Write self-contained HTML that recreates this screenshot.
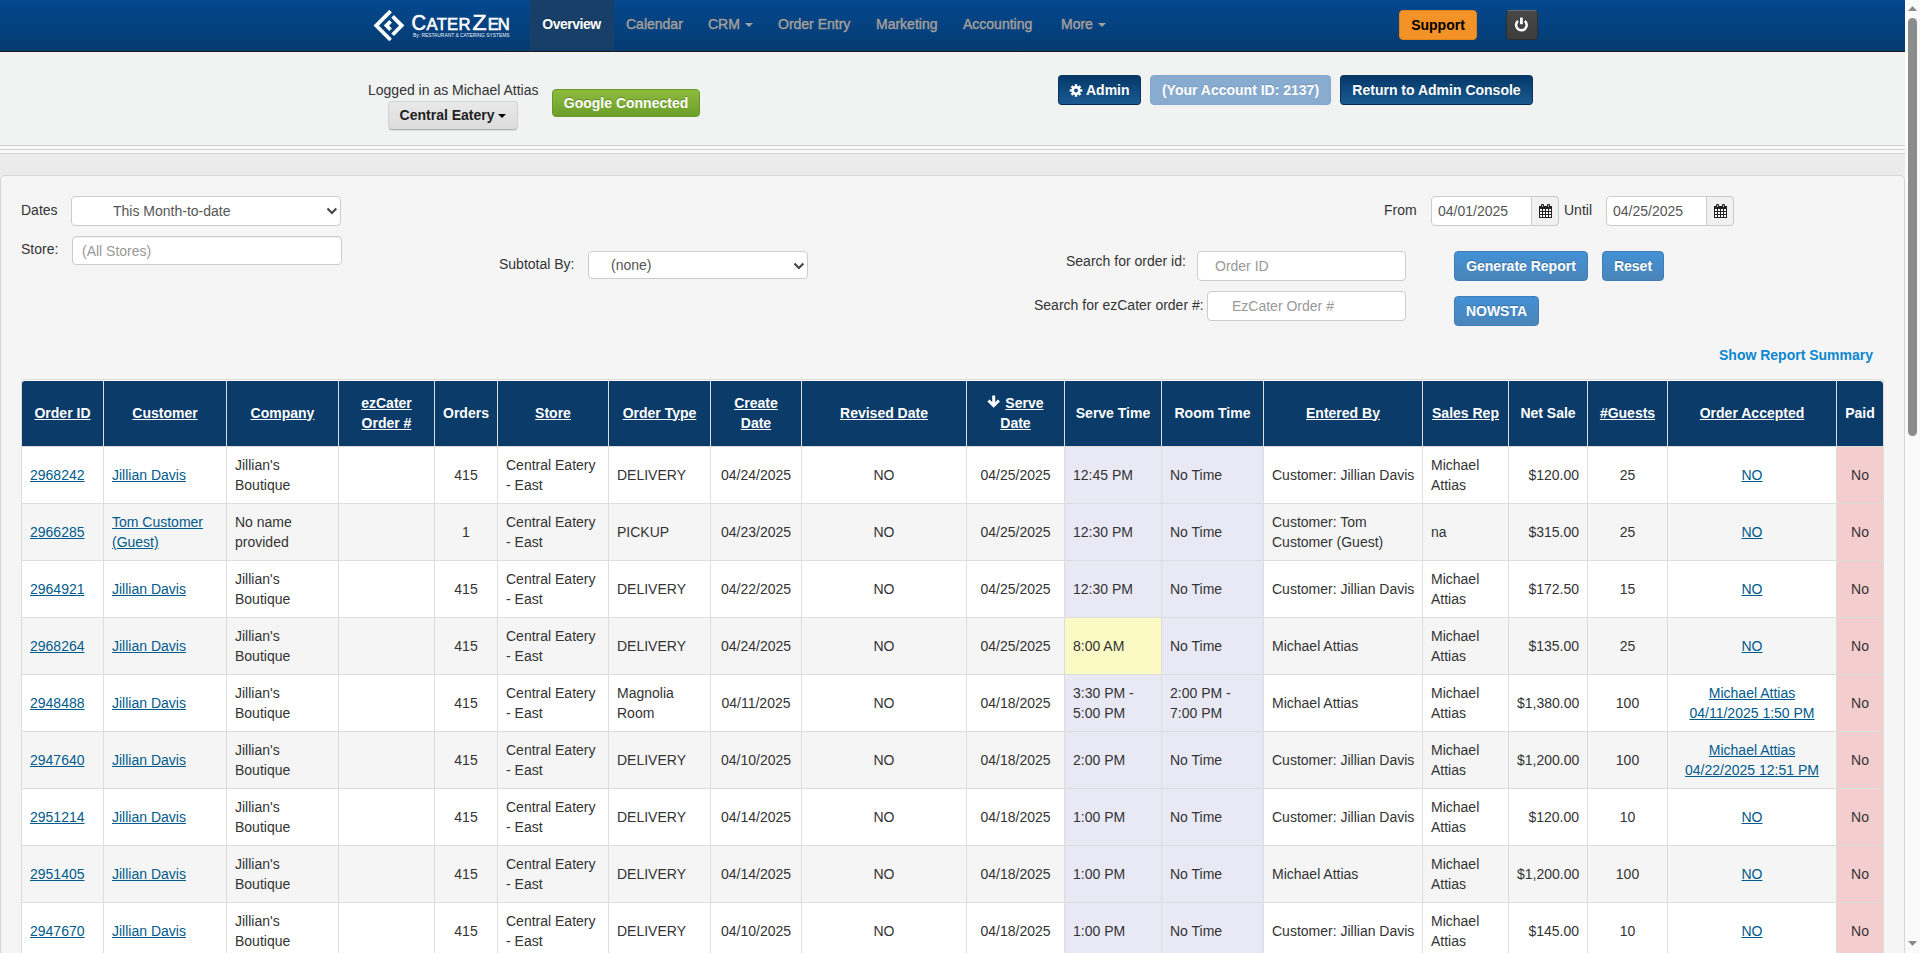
<!DOCTYPE html>
<html><head><meta charset="utf-8">
<style>
*{box-sizing:border-box}
html,body{margin:0;padding:0;width:1920px;height:953px;overflow:hidden;background:#f5f5f5}
body{font-family:"Liberation Sans",sans-serif;font-size:14px;line-height:20px;color:#333;position:relative}
.abs{position:absolute}
#nav{left:0;top:0;width:1905px;height:52px;background:linear-gradient(#04488f,#053b70);border-bottom:1px solid #1c1c1c}
#nav .it{position:absolute;top:0;height:50px;line-height:48px;color:#a0a0a0;font-size:14px;white-space:nowrap;-webkit-text-stroke:0.45px #a0a0a0;text-shadow:0 -1px 0 rgba(0,0,0,.25)}
#nav .act{background:#173f68;color:#fff;font-weight:bold;letter-spacing:-0.5px;text-align:center;-webkit-text-stroke:0;text-indent:-1px}
.caret{display:inline-block;width:0;height:0;border-left:4px solid transparent;border-right:4px solid transparent;border-top:4px solid #a3a3a3;vertical-align:middle;margin-left:3px;margin-top:0px}
#topwell{left:0;top:52px;width:1905px;height:93px;background:#f1f2f2}
.hl{position:absolute;left:0;width:1905px;height:1px;background:#d2d2d2}
.btn{position:absolute;border-radius:4px;font-weight:bold;text-align:center;white-space:nowrap}
#panel{left:0;top:175px;width:1905px;height:800px;background:#f5f5f5;border:1px solid #d6d6d6;border-radius:4px}
.lbl{position:absolute;white-space:nowrap;color:#333}
.inp{position:absolute;background:#fff;border:1px solid #ccc;border-radius:4px;white-space:nowrap;color:#555}
.ph{color:#999}
.bblue{background:linear-gradient(#4391d5,#4a84ba);color:#fff;border:1px solid #3f7cb8;text-shadow:0 -1px 0 rgba(0,0,0,.25)}
table{position:absolute;left:21px;top:379px;border-collapse:separate;border-spacing:0;table-layout:fixed;width:1863px;border:1px solid #ddd;border-left:0;border-bottom:0;border-radius:4px 4px 0 0}
th,td{border-left:1px solid #ddd;padding:8px 8px 8px 8px;vertical-align:middle;line-height:20px;text-align:left}
th{background:#0b3b68;color:#fff;font-weight:bold;text-align:center;border-top:1px solid #fff;padding:11px 8px 13px;height:66px}
th a{color:#fff;text-decoration:underline}
td{border-top:1px solid #ddd;height:57px;background:#fff;white-space:nowrap;overflow:hidden}
tr.s td{background:#f5f5f5}
td a{color:#005a8c;text-decoration:underline}
td.c{text-align:center}
td.r{text-align:right}
td.tm{background:#e9e8f5 !important}
td.ye{background:#fcfac4 !important}
td.pd{background:#f4cdcf !important;text-align:center}
th:first-child{border-top-left-radius:4px}
th:last-child{border-top-right-radius:4px}
</style></head><body>

<div id="nav" class="abs">
  <svg class="abs" style="left:0;top:0" width="520" height="52" viewBox="0 0 520 52">
    <g fill="none" stroke="#fff" stroke-width="3.75" stroke-linecap="butt" stroke-linejoin="miter">
      <polyline points="390.6,11.2 376.2,25.6 390.6,40"/>
      <polyline points="392.6,16.45 401.75,25.6 392.6,34.75"/>
      <polyline points="390.6,21.45 386.45,25.6 390.6,29.75"/>
    </g>
    <g fill="#fff" font-family="Liberation Sans" style="font-weight:normal">
      <text x="411.6" y="29.7" font-size="21.3" textLength="14.6" lengthAdjust="spacingAndGlyphs" stroke="#fff" stroke-width="0.6">C</text>
      <text x="426.5" y="29.6" font-size="16.6" textLength="44" lengthAdjust="spacing" stroke="#fff" stroke-width="0.6">ATER</text>
      <text x="472.6" y="29.6" font-size="22.5" textLength="14" lengthAdjust="spacingAndGlyphs" stroke="#fff" stroke-width="0.6">Z</text>
      <text x="487.8" y="29.6" font-size="16.6" textLength="22" lengthAdjust="spacing" stroke="#fff" stroke-width="0.6">EN</text>
      <text x="413" y="37" font-size="5.4" font-weight="normal" textLength="96.6" lengthAdjust="spacingAndGlyphs" fill="#eef2f8">By: RESTAURANT &amp; CATERING SYSTEMS</text>
    </g>
  </svg>
  <div class="it act" style="left:530px;width:84px">Overview</div>
  <div class="it" style="left:626px">Calendar</div>
  <div class="it" style="left:708px">CRM <span class="caret" style="margin-left:1px"></span></div>
  <div class="it" style="left:778px">Order Entry</div>
  <div class="it" style="left:876px">Marketing</div>
  <div class="it" style="left:963px">Accounting</div>
  <div class="it" style="left:1061px">More <span class="caret" style="margin-left:1.5px"></span></div>
  <div class="btn" style="left:1399px;top:10px;width:78px;height:30px;line-height:28px;background:#f39226;color:#000;border:1px solid #e08418">Support</div>
  <div class="btn" style="left:1506px;top:10px;width:32px;height:30px;background:linear-gradient(#474747,#3d3d3d);border:1px solid #2e2e2e;border-top-color:#6a6a6a">
    <svg class="abs" style="left:6px;top:3.5px" width="17" height="17" viewBox="0 0 17 17"><path d="M4.99 5.94 A5.3 5.3 0 1 0 11.81 5.94" fill="none" stroke="#fff" stroke-width="2.5"/><line x1="8.4" y1="2.6" x2="8.4" y2="9.2" stroke="#fff" stroke-width="2.8"/></svg>
  </div>
</div>

<div id="topwell" class="abs"></div>
<div class="hl" style="top:145px"></div>
<div class="abs" style="left:0;top:146px;width:1905px;height:3px;background:#f8f8f8"></div>
<div class="hl" style="top:149px"></div>
<div class="abs" style="left:0;top:150px;width:1905px;height:3px;background:#f8f8f8"></div>
<div class="hl" style="top:153px"></div>
<div class="abs" style="left:0;top:154px;width:1905px;height:21px;background:#ebebeb"></div>

<div class="lbl" style="left:368px;top:80px">Logged in as Michael Attias</div>
<div class="btn" style="left:388px;top:101px;width:130px;height:29px;line-height:27px;background:linear-gradient(#e9e9e9,#dcdcdc);color:#222;border:1px solid #d3d3d3;border-bottom-color:#b0b0b0;box-shadow:0 1px 1px rgba(0,0,0,.08)">Central Eatery <span class="caret" style="border-top-color:#000;margin-left:0"></span></div>
<div class="btn" style="left:552px;top:89px;width:148px;height:28px;line-height:26px;background:linear-gradient(#8dbb3c,#6c9f2a);color:#fff;border:1px solid #67982a;text-shadow:0 -1px 0 rgba(0,0,0,.25)">Google Connected</div>

<div class="btn" style="left:1058px;top:75px;width:83px;height:30px;line-height:28px;background:linear-gradient(#043868,#1b5b92);color:#fff;border:1px solid #07345f;border-bottom-color:#042a50;text-align:left;padding-left:27px;text-shadow:0 -1px 0 rgba(0,0,0,.25)">Admin</div>
<svg class="abs" style="left:1069px;top:84px" width="14" height="13" viewBox="-7 -6.5 14 13"><g fill="#fff"><circle r="4.6"/><rect x="-1.2" y="-6.3" width="2.4" height="12.6"/><rect x="-1.2" y="-6.3" width="2.4" height="12.6" transform="rotate(45)"/><rect x="-1.2" y="-6.3" width="2.4" height="12.6" transform="rotate(90)"/><rect x="-1.2" y="-6.3" width="2.4" height="12.6" transform="rotate(135)"/></g><circle r="1.9" fill="#0d4577"/></svg>
<div class="btn" style="left:1150px;top:75px;width:181px;height:30px;line-height:28px;background:#88abd0;color:#fff;border:1px solid #83a7cd;text-shadow:0 -1px 0 rgba(0,0,0,.15)">(Your Account ID: 2137)</div>
<div class="btn" style="left:1340px;top:75px;width:193px;height:30px;line-height:28px;background:linear-gradient(#043868,#1b5b92);color:#fff;border:1px solid #07345f;border-bottom-color:#042a50;text-shadow:0 -1px 0 rgba(0,0,0,.25)">Return to Admin Console</div>

<div id="panel" class="abs"></div>

<div class="lbl" style="left:21px;top:200px">Dates</div>
<div class="inp" style="left:71px;top:196px;width:270px;height:30px;line-height:28px;padding-left:41px">This Month-to-date</div>
<svg class="abs" style="left:326px;top:207px" width="12" height="8" viewBox="0 0 12 8"><polyline points="1.5,1.5 5.9,5.9 10.3,1.5" fill="none" stroke="#444" stroke-width="2.1"/></svg>
<div class="lbl" style="left:21px;top:239px">Store:</div>
<div class="inp ph" style="left:72px;top:236px;width:270px;height:29px;line-height:29px;padding-left:9px;box-shadow:inset 0 1px 1px rgba(0,0,0,.075)">(All Stores)</div>

<div class="lbl" style="left:499px;top:254px">Subtotal By:</div>
<div class="inp" style="left:588px;top:251px;width:220px;height:28px;line-height:26px;padding-left:22px">(none)</div>

<svg class="abs" style="left:793px;top:262px" width="12" height="8" viewBox="0 0 12 8"><polyline points="1.5,1.5 5.9,5.9 10.3,1.5" fill="none" stroke="#444" stroke-width="2.1"/></svg>
<div class="lbl" style="left:1384px;top:200px">From</div>
<div class="inp" style="left:1431px;top:196px;width:128px;height:30px;line-height:28px;padding-left:6px">04/01/2025</div>
<div class="abs" style="left:1531px;top:196px;width:28px;height:30px;background:#f1f1f1;border:1px solid #ccc;border-radius:0 4px 4px 0"></div><svg class="abs" style="left:1539px;top:204px" width="13" height="14" viewBox="0 0 13 14"><rect x="0" y="2" width="13" height="12" fill="#222"/><rect x="2" y="0" width="3" height="4" rx="1" fill="#222"/><rect x="8" y="0" width="3" height="4" rx="1" fill="#222"/><rect x="3" y="1" width="1" height="2" fill="#bbb"/><rect x="9" y="1" width="1" height="2" fill="#bbb"/><rect x="1" y="5" width="2" height="2" fill="#fff"/><rect x="1" y="8" width="2" height="2" fill="#fff"/><rect x="1" y="11" width="2" height="2" fill="#fff"/><rect x="4" y="5" width="2" height="2" fill="#fff"/><rect x="4" y="8" width="2" height="2" fill="#fff"/><rect x="4" y="11" width="2" height="2" fill="#fff"/><rect x="7" y="5" width="2" height="2" fill="#fff"/><rect x="7" y="8" width="2" height="2" fill="#fff"/><rect x="7" y="11" width="2" height="2" fill="#fff"/><rect x="10" y="5" width="2" height="2" fill="#fff"/><rect x="10" y="8" width="2" height="2" fill="#fff"/><rect x="10" y="11" width="2" height="2" fill="#fff"/></svg>
<div class="lbl" style="left:1564px;top:200px">Until</div>
<div class="inp" style="left:1606px;top:196px;width:128px;height:30px;line-height:28px;padding-left:6px">04/25/2025</div>

<div class="abs" style="left:1706px;top:196px;width:28px;height:30px;background:#f1f1f1;border:1px solid #ccc;border-radius:0 4px 4px 0"></div><svg class="abs" style="left:1714px;top:204px" width="13" height="14" viewBox="0 0 13 14"><rect x="0" y="2" width="13" height="12" fill="#222"/><rect x="2" y="0" width="3" height="4" rx="1" fill="#222"/><rect x="8" y="0" width="3" height="4" rx="1" fill="#222"/><rect x="3" y="1" width="1" height="2" fill="#bbb"/><rect x="9" y="1" width="1" height="2" fill="#bbb"/><rect x="1" y="5" width="2" height="2" fill="#fff"/><rect x="1" y="8" width="2" height="2" fill="#fff"/><rect x="1" y="11" width="2" height="2" fill="#fff"/><rect x="4" y="5" width="2" height="2" fill="#fff"/><rect x="4" y="8" width="2" height="2" fill="#fff"/><rect x="4" y="11" width="2" height="2" fill="#fff"/><rect x="7" y="5" width="2" height="2" fill="#fff"/><rect x="7" y="8" width="2" height="2" fill="#fff"/><rect x="7" y="11" width="2" height="2" fill="#fff"/><rect x="10" y="5" width="2" height="2" fill="#fff"/><rect x="10" y="8" width="2" height="2" fill="#fff"/><rect x="10" y="11" width="2" height="2" fill="#fff"/></svg>
<div class="lbl" style="left:1066px;top:251px">Search for order id:</div>
<div class="inp ph" style="left:1197px;top:251px;width:209px;height:30px;line-height:28px;padding-left:17px">Order ID</div>
<div class="lbl" style="left:1034px;top:295px">Search for ezCater order #:</div>
<div class="inp ph" style="left:1207px;top:291px;width:199px;height:30px;line-height:28px;padding-left:24px">EzCater Order #</div>

<div class="btn bblue" style="left:1454px;top:251px;width:134px;height:30px;line-height:28px">Generate Report</div>
<div class="btn bblue" style="left:1602px;top:251px;width:62px;height:30px;line-height:28px">Reset</div>
<div class="btn bblue" style="left:1454px;top:296px;width:85px;height:30px;line-height:28px">NOWSTA</div>

<div class="lbl" style="left:1719px;top:345px;color:#0a87ce;font-weight:bold">Show Report Summary</div>

<table>
<colgroup>
<col style="width:82px"><col style="width:123px"><col style="width:112px"><col style="width:96px"><col style="width:63px"><col style="width:111px"><col style="width:102px"><col style="width:91px"><col style="width:165px"><col style="width:98px"><col style="width:97px"><col style="width:102px"><col style="width:159px"><col style="width:86px"><col style="width:79px"><col style="width:80px"><col style="width:169px"><col style="width:47px">
</colgroup>
<thead><tr>
<th><a>Order ID</a></th><th><a>Customer</a></th><th><a>Company</a></th><th><a>ezCater</a><br><a>Order #</a></th><th>Orders</th><th><a>Store</a></th><th><a>Order Type</a></th><th><a>Create</a><br><a>Date</a></th><th><a>Revised Date</a></th><th><svg width="14" height="14" viewBox="0 0 14 14" style="vertical-align:-1px"><rect x="5.2" y="0.5" width="3" height="10" fill="#fff"/><polyline points="1.5,5.5 6.7,10.7 11.9,5.5" fill="none" stroke="#fff" stroke-width="3"/></svg> <a>Serve</a><br><a>Date</a></th><th>Serve Time</th><th>Room Time</th><th><a>Entered By</a></th><th><a>Sales Rep</a></th><th>Net Sale</th><th><a>#Guests</a></th><th><a>Order Accepted</a></th><th>Paid</th>
</tr></thead>
<tbody id="tb">
<tr><td><a>2968242</a></td><td><a>Jillian Davis</a></td><td>Jillian's<br>Boutique</td><td></td><td class="c">415</td><td>Central Eatery<br>- East</td><td>DELIVERY</td><td class="c">04/24/2025</td><td class="c">NO</td><td class="c">04/25/2025</td><td class="tm">12:45 PM</td><td class="tm">No Time</td><td>Customer: Jillian Davis</td><td>Michael<br>Attias</td><td class="r">$120.00</td><td class="c">25</td><td class="c"><a>NO</a></td><td class="pd">No</td></tr>
<tr class="s"><td><a>2966285</a></td><td><a>Tom Customer</a><br><a>(Guest)</a></td><td>No name<br>provided</td><td></td><td class="c">1</td><td>Central Eatery<br>- East</td><td>PICKUP</td><td class="c">04/23/2025</td><td class="c">NO</td><td class="c">04/25/2025</td><td class="tm">12:30 PM</td><td class="tm">No Time</td><td>Customer: Tom<br>Customer (Guest)</td><td>na</td><td class="r">$315.00</td><td class="c">25</td><td class="c"><a>NO</a></td><td class="pd">No</td></tr>
<tr><td><a>2964921</a></td><td><a>Jillian Davis</a></td><td>Jillian's<br>Boutique</td><td></td><td class="c">415</td><td>Central Eatery<br>- East</td><td>DELIVERY</td><td class="c">04/22/2025</td><td class="c">NO</td><td class="c">04/25/2025</td><td class="tm">12:30 PM</td><td class="tm">No Time</td><td>Customer: Jillian Davis</td><td>Michael<br>Attias</td><td class="r">$172.50</td><td class="c">15</td><td class="c"><a>NO</a></td><td class="pd">No</td></tr>
<tr class="s"><td><a>2968264</a></td><td><a>Jillian Davis</a></td><td>Jillian's<br>Boutique</td><td></td><td class="c">415</td><td>Central Eatery<br>- East</td><td>DELIVERY</td><td class="c">04/24/2025</td><td class="c">NO</td><td class="c">04/25/2025</td><td class="tm ye">8:00 AM</td><td class="tm">No Time</td><td>Michael Attias</td><td>Michael<br>Attias</td><td class="r">$135.00</td><td class="c">25</td><td class="c"><a>NO</a></td><td class="pd">No</td></tr>
<tr><td><a>2948488</a></td><td><a>Jillian Davis</a></td><td>Jillian's<br>Boutique</td><td></td><td class="c">415</td><td>Central Eatery<br>- East</td><td>Magnolia<br>Room</td><td class="c">04/11/2025</td><td class="c">NO</td><td class="c">04/18/2025</td><td class="tm">3:30 PM -<br>5:00 PM</td><td class="tm">2:00 PM -<br>7:00 PM</td><td>Michael Attias</td><td>Michael<br>Attias</td><td class="r">$1,380.00</td><td class="c">100</td><td class="c"><a>Michael Attias</a><br><a>04/11/2025 1:50 PM</a></td><td class="pd">No</td></tr>
<tr class="s"><td><a>2947640</a></td><td><a>Jillian Davis</a></td><td>Jillian's<br>Boutique</td><td></td><td class="c">415</td><td>Central Eatery<br>- East</td><td>DELIVERY</td><td class="c">04/10/2025</td><td class="c">NO</td><td class="c">04/18/2025</td><td class="tm">2:00 PM</td><td class="tm">No Time</td><td>Customer: Jillian Davis</td><td>Michael<br>Attias</td><td class="r">$1,200.00</td><td class="c">100</td><td class="c"><a>Michael Attias</a><br><a>04/22/2025 12:51 PM</a></td><td class="pd">No</td></tr>
<tr><td><a>2951214</a></td><td><a>Jillian Davis</a></td><td>Jillian's<br>Boutique</td><td></td><td class="c">415</td><td>Central Eatery<br>- East</td><td>DELIVERY</td><td class="c">04/14/2025</td><td class="c">NO</td><td class="c">04/18/2025</td><td class="tm">1:00 PM</td><td class="tm">No Time</td><td>Customer: Jillian Davis</td><td>Michael<br>Attias</td><td class="r">$120.00</td><td class="c">10</td><td class="c"><a>NO</a></td><td class="pd">No</td></tr>
<tr class="s"><td><a>2951405</a></td><td><a>Jillian Davis</a></td><td>Jillian's<br>Boutique</td><td></td><td class="c">415</td><td>Central Eatery<br>- East</td><td>DELIVERY</td><td class="c">04/14/2025</td><td class="c">NO</td><td class="c">04/18/2025</td><td class="tm">1:00 PM</td><td class="tm">No Time</td><td>Michael Attias</td><td>Michael<br>Attias</td><td class="r">$1,200.00</td><td class="c">100</td><td class="c"><a>NO</a></td><td class="pd">No</td></tr>
<tr><td><a>2947670</a></td><td><a>Jillian Davis</a></td><td>Jillian's<br>Boutique</td><td></td><td class="c">415</td><td>Central Eatery<br>- East</td><td>DELIVERY</td><td class="c">04/10/2025</td><td class="c">NO</td><td class="c">04/18/2025</td><td class="tm">1:00 PM</td><td class="tm">No Time</td><td>Customer: Jillian Davis</td><td>Michael<br>Attias</td><td class="r">$145.00</td><td class="c">10</td><td class="c"><a>NO</a></td><td class="pd">No</td></tr>
</tbody>
</table>

<div class="abs" style="left:1905px;top:0;width:15px;height:953px;background:#fafafa"></div>
<svg class="abs" style="left:1905px;top:0" width="15" height="953" viewBox="0 0 15 953">
<polygon points="3,11 12,11 7.5,6" fill="#8a8a8a"/>
<rect x="3" y="18" width="9" height="418" rx="4.5" fill="#8c8c8c"/>
<polygon points="3,941 12,941 7.5,946" fill="#8a8a8a"/>
</svg>
</body></html>
